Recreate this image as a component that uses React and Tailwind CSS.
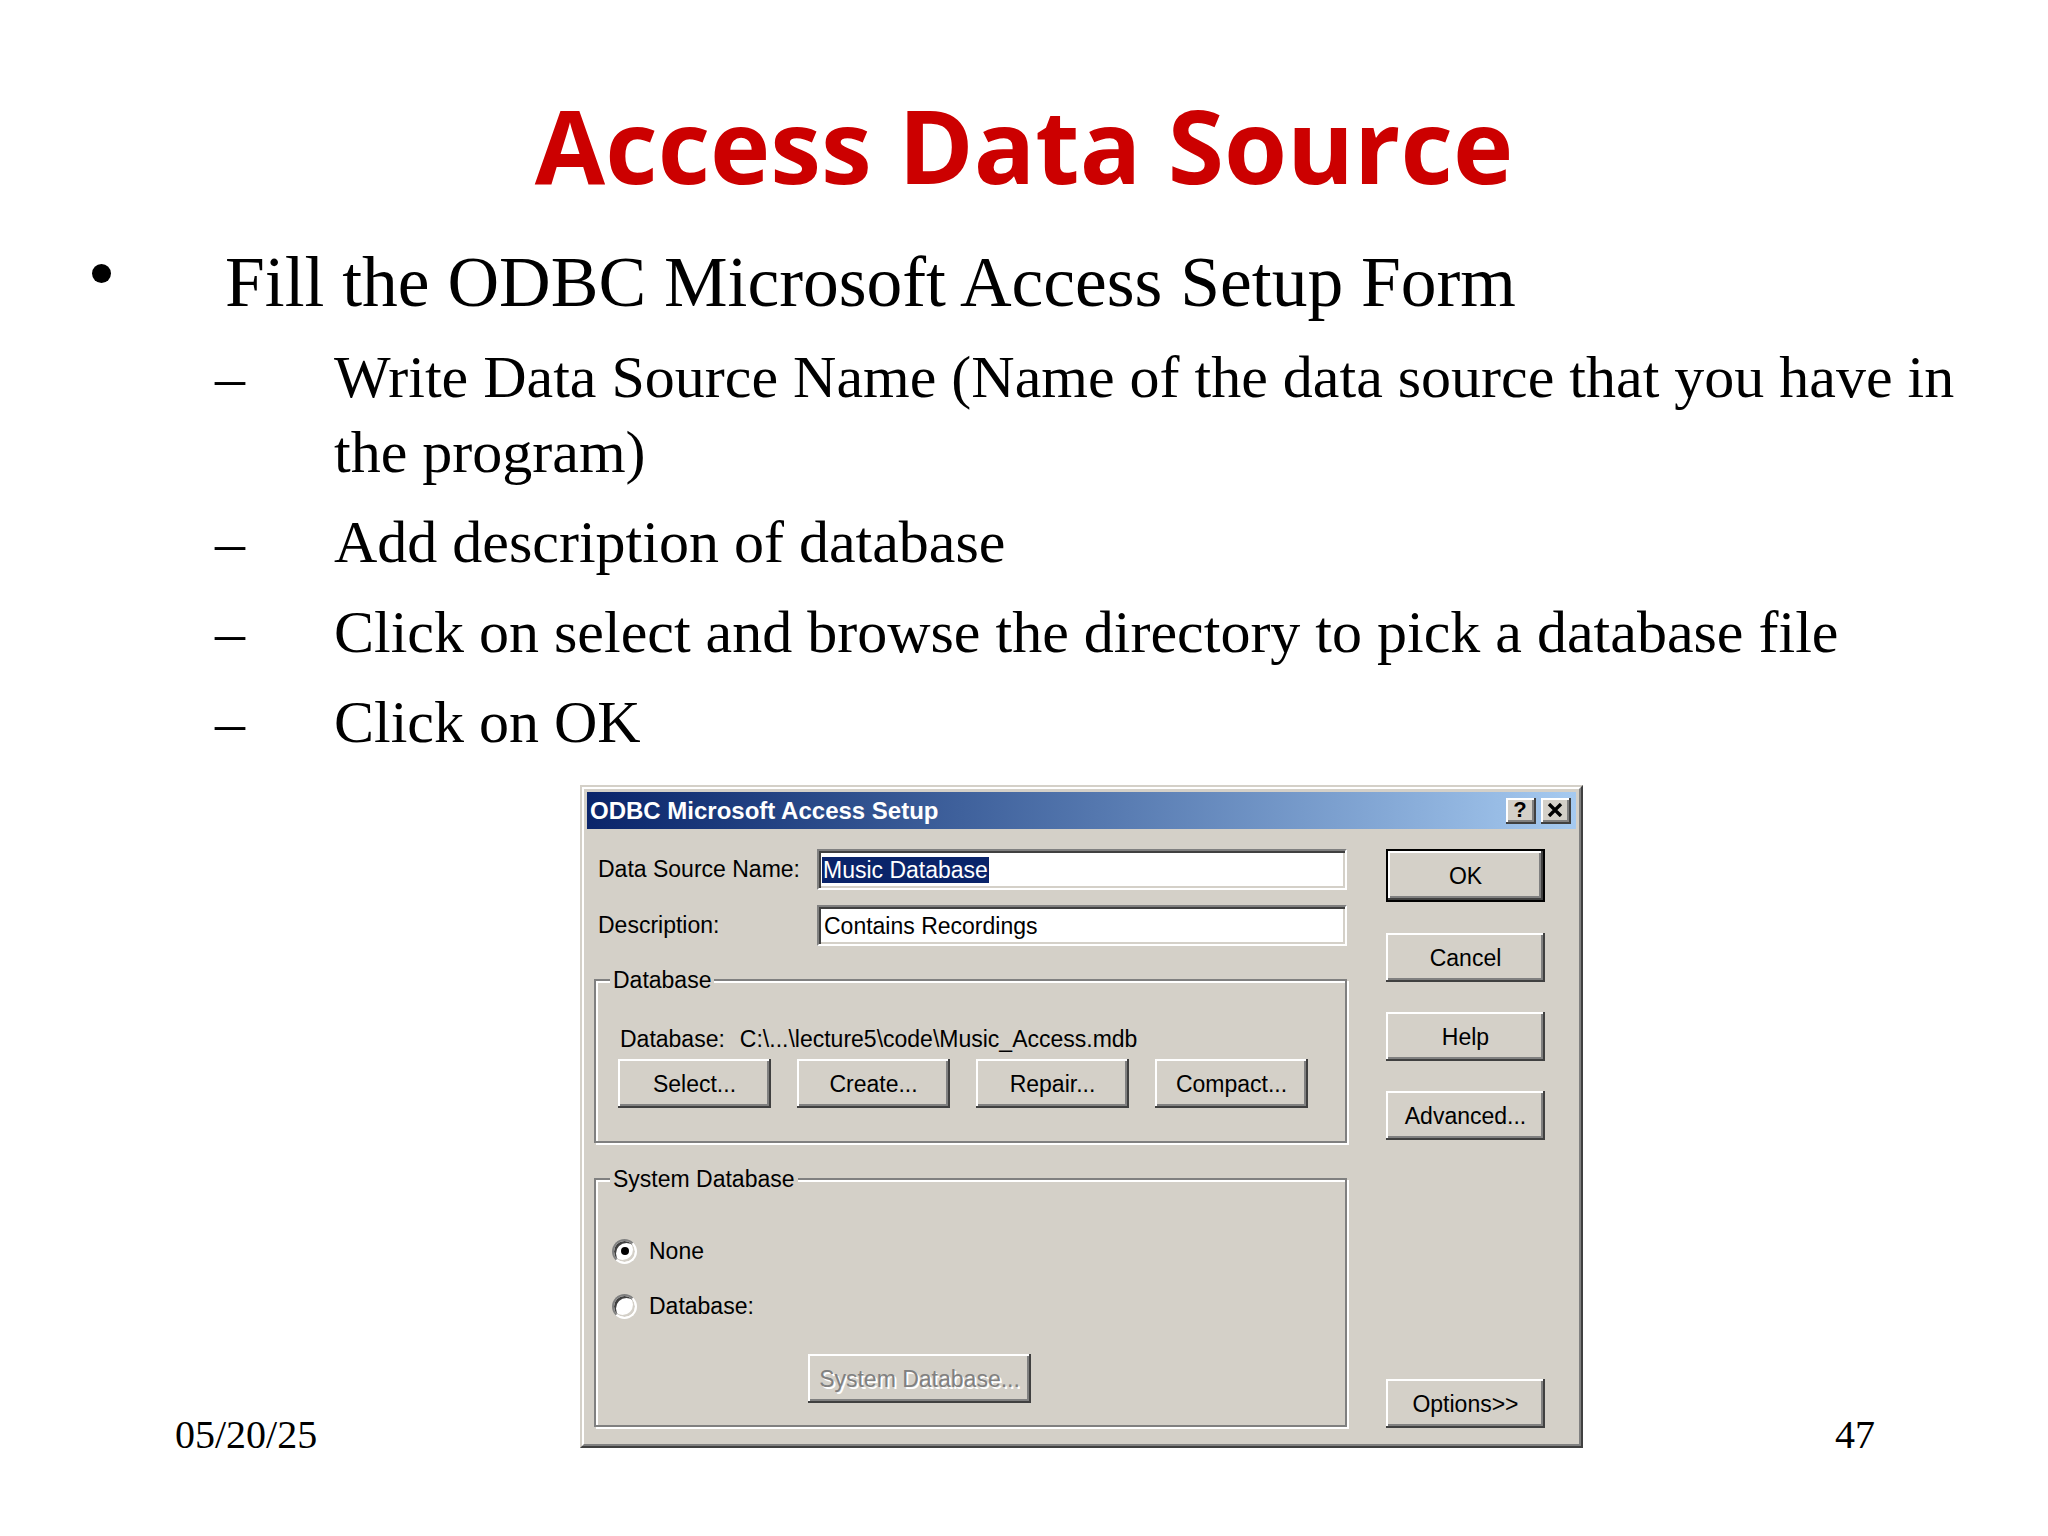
import React from "react";

const BEVEL =
  "bg-[#d4d0c8] shadow-[inset_-2px_-2px_0_#404040,inset_2px_2px_0_#ffffff,inset_-4px_-4px_0_#808080]";

function Btn({ children, className = "", disabled = false }) {
  return (
    <div
      className={
        "flex items-center justify-center h-[49px] leading-[26px] " +
        BEVEL +
        " " +
        className
      }
    >
      {disabled ? (
        <span className="text-[#808080] [text-shadow:2px_2px_0_#ffffff]">{children}</span>
      ) : (
        <span>{children}</span>
      )}
    </div>
  );
}

function TitleBtn({ children }) {
  return (
    <div
      className={
        "w-[30px] h-[26px] flex items-center justify-center " + BEVEL
      }
    >
      {children}
    </div>
  );
}

function Radio({ checked }) {
  return (
    <div className="w-[25px] h-[25px] rounded-full bg-white border-2 border-t-[#808080] border-l-[#808080] border-r-white border-b-white shadow-[inset_2px_2px_0_#404040,inset_-2px_-2px_0_#d4d0c8] flex items-center justify-center shrink-0">
      {checked && <div className="w-[8px] h-[8px] rounded-full bg-black" />}
    </div>
  );
}

function Input({ children }) {
  return (
    <div className="w-[530px] h-[41px] bg-white border-2 border-t-[#808080] border-l-[#808080] border-r-white border-b-white shadow-[inset_2px_2px_0_#404040,inset_-2px_-2px_0_#d4d0c8] flex items-center pl-[3px] leading-[26px] whitespace-nowrap">
      {children}
    </div>
  );
}

function Dialog() {
  return (
    <div className="w-[1003px] h-[663px] shrink-0 border-2 border-t-[#d4d0c8] border-l-[#d4d0c8] border-r-[#404040] border-b-[#404040] font-['Liberation_Sans',Arial,sans-serif] text-[23px] text-black">
      <div className="h-full border-2 border-t-white border-l-white border-r-[#808080] border-b-[#808080] bg-[#d4d0c8] p-[3px] flex flex-col">
        {/* Title bar */}
        <div className="h-[37px] shrink-0 flex items-center bg-linear-to-r from-[#0a246a] to-[#a6caf0] pl-[3px] pr-[5px]">
          <span className="font-bold text-white text-[24px] leading-none whitespace-nowrap">
            ODBC Microsoft Access Setup
          </span>
          <div className="ml-auto flex gap-[5px]">
            <TitleBtn>
              <span className="font-bold text-[22px] leading-none -mt-[2px] -ml-[2px]">?</span>
            </TitleBtn>
            <TitleBtn>
              <svg width="16" height="14" viewBox="0 0 16 14" className="-mt-[2px] -ml-[2px]">
                <path d="M2 1 L14 13 M14 1 L2 13" stroke="#000" strokeWidth="3.4" fill="none" />
              </svg>
            </TitleBtn>
          </div>
        </div>

        {/* Body */}
        <div className="flex-1 flex pl-[7px] pt-[20px] pb-[13px]">
          {/* Left column */}
          <div className="w-[753px] flex flex-col">
            <div className="flex items-center h-[41px]">
              <div className="w-[223px] pl-[4px] whitespace-nowrap">Data Source Name:</div>
              <Input>
                <span className="bg-[#0a246a] text-white px-[1px]">Music Database</span>
              </Input>
            </div>
            <div className="flex items-center h-[41px] mt-[15px]">
              <div className="w-[223px] pl-[4px] whitespace-nowrap">Description:</div>
              <Input>
                <span className="ml-[2px]">Contains Recordings</span>
              </Input>
            </div>

            <fieldset className="mt-[21px] h-[176px] border-2 border-[#808080] shadow-[inset_2px_2px_0_#ffffff,2px_2px_0_#ffffff]">
              <legend className="ml-[14px] px-[3px] leading-[26px] bg-[#d4d0c8]">Database</legend>
              <div className="pl-[22px]">
                <div className="mt-[33px] ml-[2px] leading-[26px] flex whitespace-nowrap">
                  <span>Database:</span>
                  <span className="ml-[15px]">{"C:\\...\\lecture5\\code\\Music_Access.mdb"}</span>
                </div>
                <div className="mt-[7px] flex gap-[26px]">
                  <Btn className="w-[153px]">Select...</Btn>
                  <Btn className="w-[153px]">Create...</Btn>
                  <Btn className="w-[153px]">Repair...</Btn>
                  <Btn className="w-[153px]">Compact...</Btn>
                </div>
              </div>
            </fieldset>

            <fieldset className="mt-[23px] h-[261px] border-2 border-[#808080] shadow-[inset_2px_2px_0_#ffffff,2px_2px_0_#ffffff]">
              <legend className="ml-[14px] px-[3px] leading-[26px] bg-[#d4d0c8]">System Database</legend>
              <div className="pl-[16px]">
                <div className="mt-[46px] flex items-center h-[26px]">
                  <Radio checked />
                  <span className="ml-[12px] leading-[26px]">None</span>
                </div>
                <div className="mt-[29px] flex items-center h-[26px]">
                  <Radio />
                  <span className="ml-[12px] leading-[26px]">Database:</span>
                </div>
                <div className="mt-[35px] ml-[196px]">
                  <Btn className="w-[223px] h-[48px]" disabled>
                    System Database...
                  </Btn>
                </div>
              </div>
            </fieldset>
          </div>

          {/* Right column */}
          <div className="ml-[39px] w-[159px] flex flex-col">
            <div className="border-2 border-black">
              <Btn className="h-[45px]">OK</Btn>
            </div>
            <Btn className="mt-[31px]">Cancel</Btn>
            <Btn className="mt-[30px]">Help</Btn>
            <Btn className="mt-[30px]">Advanced...</Btn>
            <Btn className="mt-auto">{"Options>>"}</Btn>
          </div>
        </div>
      </div>
    </div>
  );
}

function SubItem({ children, className = "" }) {
  return (
    <div className={"flex " + className}>
      <div className="w-[334px] shrink-0 pl-[215px]">–</div>
      <div className="whitespace-nowrap">{children}</div>
    </div>
  );
}

export default function App() {
  return (
    <div className="w-[2048px] h-[1536px] bg-white overflow-hidden flex flex-col">
      <h1 className="pt-[94px] text-center text-[102px] leading-[102px] font-bold text-[#cc0000] font-['Open_Sans',sans-serif]">
        Access Data Source
      </h1>

      <div className="font-['Liberation_Serif','Times_New_Roman',serif] text-black">
        <div className="mt-[44px] flex">
          <div className="w-[225px] shrink-0 pl-[92px] pt-[24px]">
            <div className="w-[19px] h-[19px] rounded-full bg-black" />
          </div>
          <div className="text-[71.5px] leading-[84px] whitespace-nowrap">
            Fill the ODBC Microsoft Access Setup Form
          </div>
        </div>

        <div className="mt-[16px] text-[60px] leading-[75px]">
          <SubItem>
            Write Data Source Name (Name of the data source that you have in
            <br />
            the program)
          </SubItem>
          <SubItem className="mt-[15px]">Add description of database</SubItem>
          <SubItem className="mt-[15px]">
            Click on select and browse the directory to pick a database file
          </SubItem>
          <SubItem className="mt-[15px]">Click on OK</SubItem>
        </div>

        <div className="mt-[25px] flex items-start">
          <div className="w-[580px] shrink-0 pl-[175px] pt-[627px] text-[40px] leading-[46px]">
            05/20/25
          </div>
          <Dialog />
          <div className="ml-[252px] pt-[627px] text-[40px] leading-[46px]">47</div>
        </div>
      </div>
    </div>
  );
}
